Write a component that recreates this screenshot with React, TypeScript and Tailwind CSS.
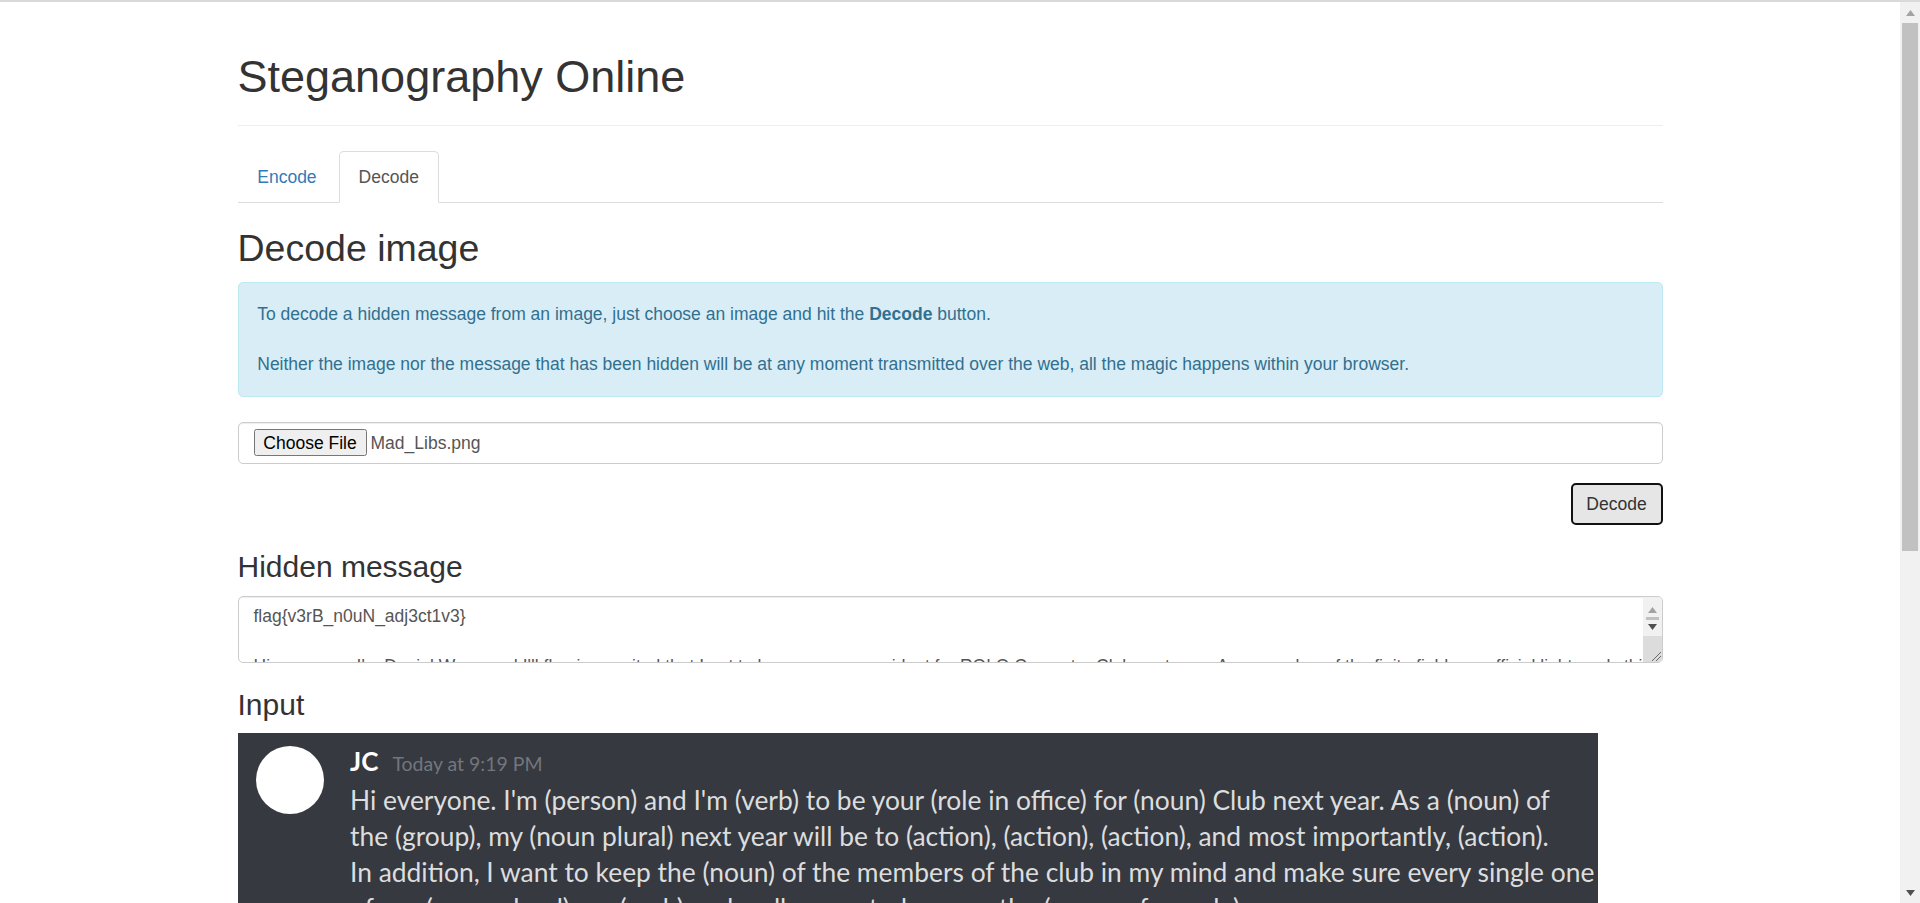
import React from "react";

const discordLines = [
  "Hi everyone. I'm (person) and I'm (verb) to be your (role in office) for (noun) Club next year. As a (noun) of",
  "the (group), my (noun plural) next year will be to (action), (action), (action), and most importantly, (action).",
  "In addition, I want to keep the (noun) of the members of the club in my mind and make sure every single one",
  "of our (noun plural) are (verb) and well respected among the (group of people).",
];

const PageScrollbar = () => (
  <div className="w-[20px] shrink-0 bg-[#f1f1f1] flex flex-col items-center">
    <div className="h-[21px] w-full flex items-center justify-center">
      <svg width="9" height="6" viewBox="0 0 9 6">
        <polygon points="4.5,0 9,6 0,6" fill="#a3a3a3" />
      </svg>
    </div>
    <div className="h-[528px] w-[16px] bg-[#c1c1c1]" />
    <div className="flex-1" />
    <div className="h-[21px] w-full flex items-center justify-center">
      <svg width="9" height="6" viewBox="0 0 9 6">
        <polygon points="0,0 9,0 4.5,6" fill="#505050" />
      </svg>
    </div>
  </div>
);

const TextareaScrollbar = () => (
  <div className="absolute right-0 top-0 bottom-0 w-[19px] bg-[#f1f1f1] flex flex-col">
    <div className="h-[18px] flex items-end justify-center pb-[2px]">
      <svg width="9" height="6" viewBox="0 0 9 6">
        <polygon points="4.5,0 9,6 0,6" fill="#a3a3a3" />
      </svg>
    </div>
    <div className="h-[7px] flex items-center justify-center">
      <div className="h-[3px] w-[13px] bg-[#c1c1c1]" />
    </div>
    <div className="h-[14px] flex items-start justify-center pt-[2px]">
      <svg width="9" height="6" viewBox="0 0 9 6">
        <polygon points="0,0 9,0 4.5,6" fill="#505050" />
      </svg>
    </div>
    <div className="flex-1 bg-[#dcdcdc] flex items-end justify-end">
      <svg width="14" height="14" viewBox="0 0 14 14">
        <line x1="13" y1="4" x2="4" y2="13" stroke="#6b6b6b" strokeWidth="1" />
        <line x1="13" y1="8" x2="8" y2="13" stroke="#6b6b6b" strokeWidth="1" />
      </svg>
    </div>
  </div>
);

export default function App() {
  return (
    <div className="h-[903px] overflow-hidden flex flex-col bg-white font-['Liberation_Sans',Arial,sans-serif] text-[#333]">
      <div className="h-[2px] shrink-0 bg-[#d9d9d9]" />
      <div className="flex flex-1 min-h-0">
        <main className="flex-1 min-w-0">
          <div className="w-[1425px] mx-auto">
            {/* page header */}
            <div className="mt-[50px] mb-[25px] pb-[11.25px] border-b border-[#eee]">
              <h1 className="text-[45px] leading-[1.1] mb-[12.5px]">Steganography Online</h1>
            </div>

            {/* tabs */}
            <ul className="flex border-b border-[#ddd] text-[17.5px] leading-[25px]">
              <li className="-mb-px mr-[2.5px]">
                <span className="block px-[18.75px] py-[12.5px] border border-transparent rounded-t-[5px] text-[#337ab7]">
                  Encode
                </span>
              </li>
              <li className="-mb-px">
                <span className="block px-[18.75px] py-[12.5px] border border-[#ddd] border-b-white bg-white rounded-t-[5px] text-[#555]">
                  Decode
                </span>
              </li>
            </ul>

            <h2 className="text-[37.5px] leading-[1.1] mt-[25px] mb-[12.5px]">Decode image</h2>

            <div className="p-[18.75px] mb-[25px] border border-[#bce8f1] bg-[#d9edf7] text-[#31708f] rounded-[5px] text-[17.5px] leading-[25px]">
              To decode a hidden message from an image, just choose an image and hit the <b>Decode</b> button.
              <br />
              <br />
              Neither the image nor the message that has been hidden will be at any moment transmitted over the web,
              all the magic happens within your browser.
            </div>

            {/* file input */}
            <div className="h-[42.5px] mb-[18.75px] px-[15px] border border-[#ccc] rounded-[5px] shadow-[inset_0_1px_1px_rgba(0,0,0,0.075)] flex items-center text-[17.5px] text-[#555]">
              <span className="w-[113px] h-[27px] flex items-center justify-center border border-[#767676] rounded-[2.5px] bg-[#efefef] text-black">
                Choose File
              </span>
              <span className="ml-[4px]">Mad_Libs.png</span>
            </div>

            <div className="flex justify-end">
              <button className="w-[92px] h-[42.5px] border-2 border-[#111] rounded-[5px] bg-[#e6e6e6] text-[17.5px] text-[#333]">
                Decode
              </button>
            </div>

            <h3 className="text-[30px] leading-[1.1] mt-[25px] mb-[12.5px]">Hidden message</h3>

            {/* textarea look-alike */}
            <div className="relative h-[67px] overflow-hidden border border-[#ccc] rounded-[5px] shadow-[inset_0_1px_1px_rgba(0,0,0,0.075)] px-[15px] py-[7.5px] text-[17.5px] leading-[25px] text-[#555]">
              <div>flag{"{"}v3rB_n0uN_adj3ct1v3{"}"}</div>
              <div>&nbsp;</div>
              <div className="whitespace-nowrap">
                Hi everyone, I'm Daniel Wang and I'll flaming excited that I get to be your new president for ROLO Computer Club next year. As a member of the finite field, my official light goals this year will be
              </div>
              <TextareaScrollbar />
            </div>

            <h3 className="text-[30px] leading-[1.1] mt-[25px] mb-[12.5px]">Input</h3>

            {/* discord screenshot */}
            <div className="w-[1360px] h-[300px] bg-[#36393f] flex pl-[18px] pt-[13px] font-['Lato',sans-serif]">
              <div className="w-[68px] h-[68px] shrink-0 rounded-full bg-white" />
              <div className="ml-[26.5px]">
                <div className="flex items-baseline h-[30px] leading-[30px]">
                  <span className="text-[26px] font-bold text-white">JC</span>
                  <span className="ml-[14px] text-[19.5px] text-[#72767d]">Today at 9:19 PM</span>
                </div>
                <div className="mt-[6px] text-[26.4px] leading-[36px] text-[#dcddde]">
                  {discordLines.map((line) => (
                    <div key={line} className="whitespace-nowrap">
                      {line}
                    </div>
                  ))}
                </div>
              </div>
            </div>
          </div>
        </main>
        <PageScrollbar />
      </div>
    </div>
  );
}
